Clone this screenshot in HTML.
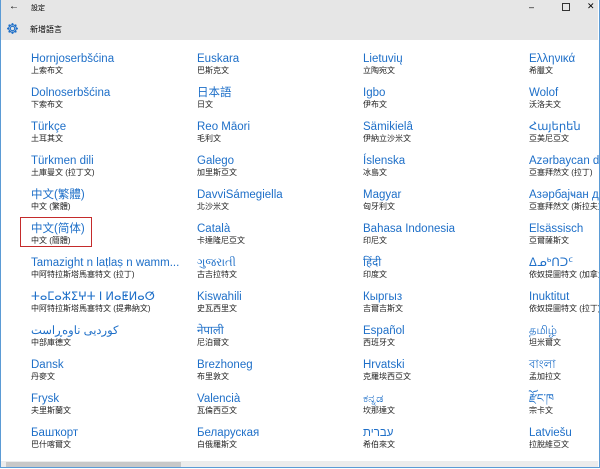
<!DOCTYPE html><html><head><meta charset="utf-8"><style>
body{margin:0;width:600px;height:469px;overflow:hidden;background:#fff;font-family:"Liberation Sans","Noto Sans CJK TC",sans-serif;position:relative}
.frame{position:absolute;left:0;top:0;width:598px;height:467px;border:1px solid #5b9bd5;border-top:none}
.tb{position:absolute;left:1px;top:0;width:597px;height:40px;background:#e6e6e6}
.t{position:absolute;font-size:8px;color:#000}
.it{position:absolute;width:150px}
.n{font-size:11.5px;color:#1e6fc8;white-space:nowrap;line-height:13px}
.s{font-size:8px;color:#222;white-space:nowrap;line-height:10px}
.red{position:absolute;left:20px;top:217px;width:70px;height:28px;border:1.5px solid #c42b2b}
.sb{position:absolute;left:6px;top:462px;width:175px;height:5px;background:#c8c8c8}
.sbt{position:absolute;left:1px;top:461px;width:597px;height:7px;background:#ececec}
</style></head><body>
<div class="tb"></div>
<div class="t" style="left:9px;top:1px;font-size:10px">←</div>
<div class="t" style="left:31px;top:3px;font-size:7px">設定</div>
<div class="t" style="left:529px;top:2px;font-size:9px">–</div>
<div class="t" style="left:562px;top:3px;width:6px;height:6px;border:1px solid #333"></div>
<div class="t" style="left:587px;top:1px;font-size:9px">✕</div>
<svg style="position:absolute;left:6px;top:22px" width="13" height="13" viewBox="0 0 24 24"><circle cx="12" cy="12" r="4" fill="none" stroke="#1e6fc8" stroke-width="2"/><path d="M12 2v4M12 18v4M2 12h4M18 12h4M5 5l3 3M16 16l3 3M5 19l3-3M16 8l3-3" stroke="#1e6fc8" stroke-width="3"/><circle cx="12" cy="12" r="7" fill="none" stroke="#1e6fc8" stroke-width="2"/></svg>
<div class="t" style="left:30px;top:24px">新增語言</div>
<div class="sbt"></div><div class="sb"></div>
<div class="red"></div>
<div id="c"></div>
<div class="frame"></div>
<script>
var d=[
["Hornjoserbšćina","上索布文","Euskara","巴斯克文","Lietuvių","立陶宛文","Ελληνικά","希臘文"],
["Dolnoserbšćina","下索布文","日本語","日文","Igbo","伊布文","Wolof","沃洛夫文"],
["Türkçe","土耳其文","Reo Māori","毛利文","Sämikielâ","伊納立沙米文","Հայերեն","亞美尼亞文"],
["Türkmen dili","土庫曼文 (拉丁文)","Galego","加里斯亞文","Íslenska","冰島文","Azərbaycan dili","亞塞拜然文 (拉丁)"],
["中文(繁體)","中文 (繁體)","DavviSámegiella","北沙米文","Magyar","匈牙利文","Азәрбајҹан дили","亞塞拜然文 (斯拉夫文)"],
["中文(简体)","中文 (簡體)","Català","卡達隆尼亞文","Bahasa Indonesia","印尼文","Elsässisch","亞爾薩斯文"],
["Tamazight n laṭlaṣ n wamm...","中阿特拉斯塔馬塞特文 (拉丁)","ગુજરાતી","古吉拉特文","हिंदी","印度文","ᐃᓄᒃᑎᑐᑦ","依奴提圖特文 (加拿大)"],
["ⵜⴰⵎⴰⵣⵉⵖⵜ ⵏ ⵍⴰⵟⵍⴰⵚ","中阿特拉斯塔馬塞特文 (提弗納文)","Kiswahili","史瓦西里文","Кыргыз","吉爾吉斯文","Inuktitut","依奴提圖特文 (拉丁)"],
["کوردیی ناوەڕاست","中部庫德文","नेपाली","尼泊爾文","Español","西班牙文","தமிழ்","坦米爾文"],
["Dansk","丹麥文","Brezhoneg","布里敦文","Hrvatski","克羅埃西亞文","বাংলা","孟加拉文"],
["Frysk","夫里斯蘭文","Valencià","瓦倫西亞文","ಕನ್ನಡ","坎那達文","རྫོང་ཁ","宗卡文"],
["Башҡорт","巴什喀爾文","Беларуская","白俄羅斯文","עברית","希伯來文","Latviešu","拉脫維亞文"]];
var xs=[31,197,363,529],h="";
d.forEach(function(r,i){for(var j=0;j<4;j++){h+='<div class="it" style="left:'+xs[j]+'px;top:'+(53+i*34)+'px"><div class="n">'+r[j*2]+'</div><div class="s">'+r[j*2+1]+'</div></div>';}});
document.getElementById('c').innerHTML=h;
</script>
</body></html>
